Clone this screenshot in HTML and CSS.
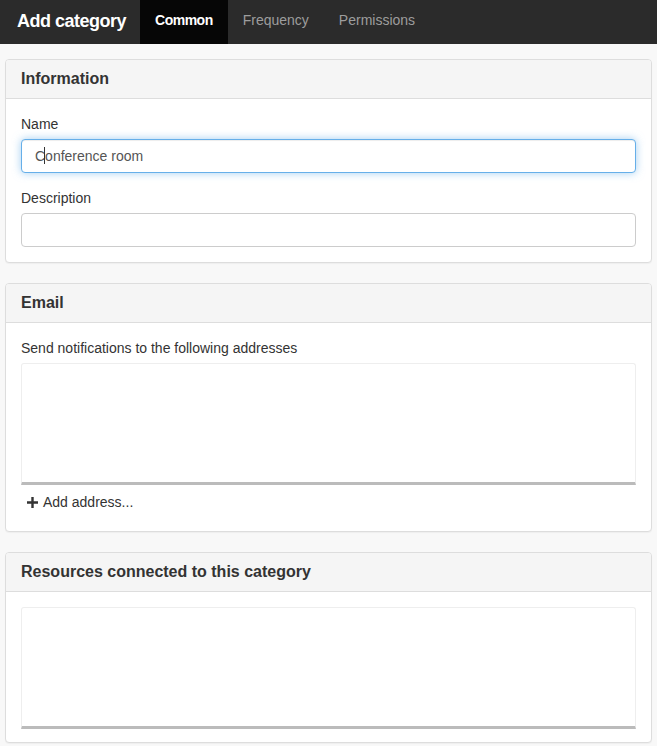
FILE: index.html
```html
<!DOCTYPE html>
<html lang="en">
<head>
    <meta charset="UTF-8">
    <meta name="viewport" content="width=device-width, initial-scale=1.0">
    <title>Add category</title>
    <link rel="stylesheet" href="styles.css">
</head>
<body>
    <div class="navbar">
        <span class="brand">Add category</span>
        <a class="tab active" href="#">Common</a>
        <a class="tab" href="#">Frequency</a>
        <a class="tab" href="#">Permissions</a>
    </div>

    <div class="content">
        <div class="panel">
            <div class="panel-heading">Information</div>
            <div class="panel-body">
                <div class="form-group">
                    <label for="name">Name</label>
                    <div class="input-wrap">
                        <input type="text" id="name" class="form-control focused" value="Conference room">
                        <span class="caret"></span>
                    </div>
                </div>
                <div class="form-group">
                    <label for="description">Description</label>
                    <input type="text" id="description" class="form-control">
                </div>
            </div>
        </div>

        <div class="panel">
            <div class="panel-heading">Email</div>
            <div class="panel-body">
                <label>Send notifications to the following addresses</label>
                <div class="list-box"></div>
                <a class="add-link" href="#">
                    <svg width="11" height="11" viewBox="0 0 11 11"><path d="M5.5 0v11M0 5.5h11" stroke="#333" stroke-width="2.4"/></svg>
                    Add address...
                </a>
            </div>
        </div>

        <div class="panel">
            <div class="panel-heading">Resources connected to this category</div>
            <div class="panel-body last">
                <div class="list-box"></div>
            </div>
        </div>
    </div>
</body>
</html>
```

FILE: styles.css
```css
* {
    margin: 0;
    padding: 0;
    box-sizing: border-box;
}

body {
    font-family: "Liberation Sans", Arial, sans-serif;
    font-size: 14px;
    line-height: 20px;
    color: #333;
    background-color: #f8f8f8;
}

.navbar {
    display: flex;
    align-items: stretch;
    height: 44px;
    background-color: #2b2b2b;
}

.brand {
    padding: 0 14px 0 17px;
    font-size: 18px;
    line-height: 42px;
    font-weight: bold;
    color: #fff;
    letter-spacing: -0.5px;
}

.tab {
    padding: 0 15px;
    line-height: 40px;
    color: #9d9d9d;
    text-decoration: none;
}

.tab.active {
    background-color: #060606;
    color: #fff;
    font-weight: bold;
    letter-spacing: -0.5px;
}

.content {
    padding: 15px 5px 0;
}

.panel {
    background-color: #fff;
    border: 1px solid #ddd;
    border-radius: 4px;
    margin-bottom: 20px;
    box-shadow: 0 1px 1px rgba(0, 0, 0, 0.04);
}

.panel-heading {
    padding: 10px 15px 10px;
    font-size: 16px;
    line-height: 18px;
    font-weight: bold;
    color: #333;
    background-color: #f5f5f5;
    border-bottom: 1px solid #ddd;
    border-radius: 3px 3px 0 0;
}

.panel-body {
    padding: 15px 15px 15px;
}

.panel-body.last {
    padding-bottom: 13px;
}

label {
    display: block;
    margin-bottom: 5px;
    color: #333;
}

.form-group {
    margin-bottom: 15px;
}

.form-group:last-child {
    margin-bottom: 0;
}

.input-wrap {
    position: relative;
}

.form-control {
    display: block;
    width: 100%;
    height: 34px;
    padding: 6px 13px;
    font-family: inherit;
    font-size: 14px;
    color: #555;
    background-color: #fff;
    border: 1px solid #ccc;
    border-radius: 4px;
    outline: none;
}

.form-control.focused {
    border-color: #66afe9;
    box-shadow: inset 0 1px 1px rgba(0, 0, 0, 0.075), 0 0 8px rgba(102, 175, 233, 0.6);
}

.caret {
    position: absolute;
    left: 23px;
    top: 8px;
    width: 1px;
    height: 17px;
    background-color: #333;
}

.list-box {
    height: 122px;
    border: 1px solid #eee;
    border-bottom: 3px solid #bbb;
    border-radius: 3px 3px 0 0;
}

.add-link {
    display: flex;
    align-items: center;
    gap: 5px;
    padding: 7px 6px 4px;
    color: #333;
    text-decoration: none;
}
```
